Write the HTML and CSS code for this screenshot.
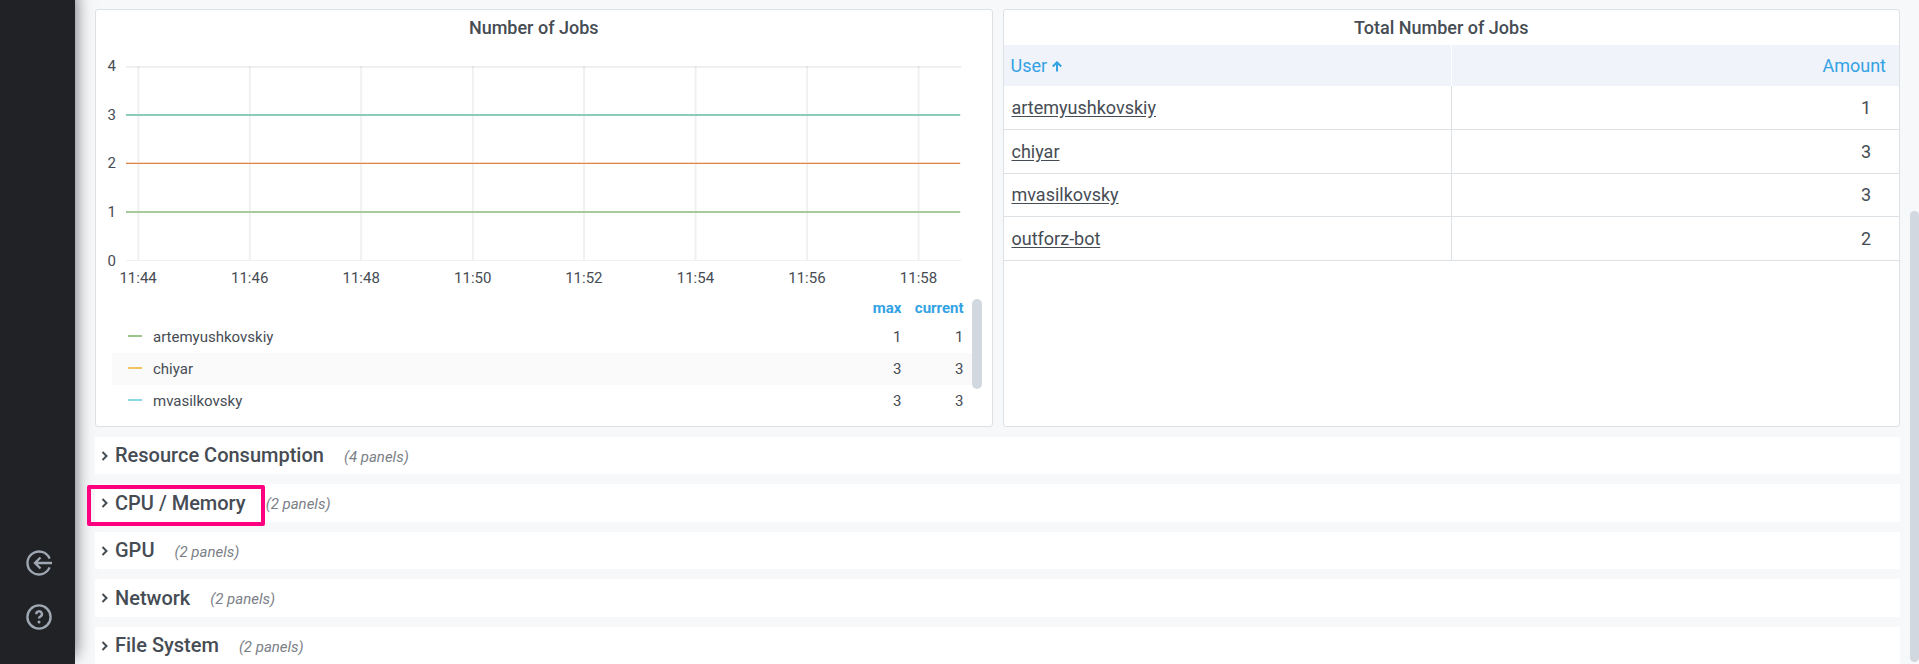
FILE: index.html
```html
<!DOCTYPE html>
<html lang="en">
<head>
<meta charset="utf-8">
<title>Jobs dashboard</title>
<link rel="stylesheet" href="styles.css">
</head>
<body>
<div class="app">
  <nav class="sidebar" aria-label="Main">
    <a class="side-link" href="#signin" aria-label="Sign in">
      <svg class="side-icon" viewBox="0 0 26 26"><path d="M23.600 8.600A11.500 11.500 0 1 0 23.600 17.400"/><path d="M26 13H9.500M14.500 7.500L9 13l5.500 5.500"/></svg>
    </a>
    <a class="side-link" href="#help" aria-label="Help">
      <svg class="side-icon" viewBox="0 0 26 26"><circle cx="13" cy="13" r="11.600"/><path d="M10.300 10.200A2.800 2.800 0 1 1 14.300 12.600Q13 13.200 13 14.600"/><circle class="dot" cx="13" cy="18" r="1.500"/></svg>
    </a>
  </nav>
  <main class="dashboard">
    <div class="panels">
      <section class="panel">
        <h2 class="panel-title">Number of Jobs</h2>
        <div class="chart">
          <svg class="plot" role="img" aria-label="Number of jobs over time">
            <g class="grid">
              <rect x="0" y="10" width="100%" height="2"/>
              <rect x="0" y="204" width="100%" height="1"/>
              <rect x="1.350%" y="10" width="2" height="194"/>
              <rect x="14.700%" y="10" width="2" height="194"/>
              <rect x="28.030%" y="10" width="2" height="194"/>
              <rect x="41.400%" y="10" width="2" height="194"/>
              <rect x="54.700%" y="10" width="2" height="194"/>
              <rect x="68.050%" y="10" width="2" height="194"/>
              <rect x="81.400%" y="10" width="2" height="194"/>
              <rect x="94.750%" y="10" width="2" height="194"/>
            </g>
            <rect class="teal" x="0" y="58" width="99.850%" height="2"/>
            <rect class="orange-soft" x="0" y="106" width="99.850%" height="1"/>
            <rect class="orange" x="0" y="107" width="99.850%" height="1"/>
            <rect class="green" x="0" y="155" width="99.850%" height="2"/>
            <g class="y-label">
              <text x="-10" y="15">4</text><text x="-10" y="64">3</text><text x="-10" y="112">2</text><text x="-10" y="161">1</text><text x="-10" y="210">0</text>
            </g>
            <g class="x-label">
              <text x="1.450%" y="227">11:44</text><text x="14.800%" y="227">11:46</text><text x="28.150%" y="227">11:48</text><text x="41.500%" y="227">11:50</text><text x="54.800%" y="227">11:52</text><text x="68.150%" y="227">11:54</text><text x="81.500%" y="227">11:56</text><text x="94.850%" y="227">11:58</text>
            </g>
          </svg>
        </div>
        <div class="legend">
          <table class="legend-table">
            <thead><tr><th class="name"></th><th>max</th><th>current</th></tr></thead>
            <tbody>
              <tr><td class="name"><i class="swatch s-green"></i>artemyushkovskiy</td><td>1</td><td>1</td></tr>
              <tr><td class="name"><i class="swatch s-yellow"></i>chiyar</td><td>3</td><td>3</td></tr>
              <tr><td class="name"><i class="swatch s-blue"></i>mvasilkovsky</td><td>3</td><td>3</td></tr>
            </tbody>
          </table>
          <div class="legend-track"><div class="thumb"></div></div>
        </div>
      </section>
      <section class="panel">
        <h2 class="panel-title">Total Number of Jobs</h2>
        <table class="users">
          <thead><tr>
            <th><button class="sort">User <svg class="arrow" viewBox="0 0 10 11"><path d="M5 10.500V1.500M0.800 5.500L5 1.300l4.200 4.200"/></svg></button></th>
            <th class="num"><button class="sort">Amount</button></th>
          </tr></thead>
          <tbody>
            <tr><td><a href="#u1">artemyushkovskiy</a></td><td class="num">1</td></tr>
            <tr><td><a href="#u2">chiyar</a></td><td class="num">3</td></tr>
            <tr><td><a href="#u3">mvasilkovsky</a></td><td class="num">3</td></tr>
            <tr><td><a href="#u4">outforz-bot</a></td><td class="num">2</td></tr>
          </tbody>
        </table>
      </section>
    </div>
    <div class="rows">
      <button class="row"><svg class="chevron" viewBox="0 0 8 10"><path d="M1.500 1L5.500 5l-4 4"/></svg><span class="row-title">Resource Consumption</span><span class="count">(4 panels)</span></button>
      <button class="row"><svg class="chevron" viewBox="0 0 8 10"><path d="M1.500 1L5.500 5l-4 4"/></svg><span class="row-title">CPU / Memory</span><span class="count">(2 panels)</span><span class="marker"></span></button>
      <button class="row"><svg class="chevron" viewBox="0 0 8 10"><path d="M1.500 1L5.500 5l-4 4"/></svg><span class="row-title">GPU</span><span class="count">(2 panels)</span></button>
      <button class="row"><svg class="chevron" viewBox="0 0 8 10"><path d="M1.500 1L5.500 5l-4 4"/></svg><span class="row-title">Network</span><span class="count">(2 panels)</span></button>
      <button class="row"><svg class="chevron" viewBox="0 0 8 10"><path d="M1.500 1L5.500 5l-4 4"/></svg><span class="row-title">File System</span><span class="count">(2 panels)</span></button>
    </div>
  </main>
  <div class="page-track"><div class="page-thumb"></div></div>
</div>
</body>
</html>
```
FILE: styles.css
```css
* { box-sizing: border-box; }
body {
  margin: 0;
  background: #f7f8fa;
  color: #464c54;
  font: 18px/24px Roboto, sans-serif;
}
button { border: 0; padding: 0; background: none; font: inherit; color: inherit; text-align: left; }
.app { display: flex; height: 100vh; overflow: hidden; }

.sidebar {
  flex: none;
  width: 75px;
  padding: 0 0 34px 26px;
  display: flex;
  flex-direction: column;
  justify-content: flex-end;
  gap: 28px;
  background: #202226;
  box-shadow: 0 -8px 16px rgba(0, 0, 0, .6);
}
.side-link { display: block; height: 26px; }
.side-icon { display: block; width: 26px; height: 26px; fill: none; stroke: #9fa7b3; stroke-width: 2.4; }
.side-icon .dot { fill: #9fa7b3; stroke: none; }

.dashboard { flex: 1; min-width: 0; padding: 9px 10px 0 20px; }
.panels { display: grid; grid-template-columns: 1fr 1fr; gap: 10px; }
.panel { min-width: 0; height: 418px; border: 1px solid #dce1e6; border-radius: 3px; background: #fff; }
.panel-title { margin: 0; height: 35px; padding-right: 20px; font-size: 18px; line-height: 36px; font-weight: 500; text-align: center; }

.chart { padding: 11px 30px 0; }
.plot { display: block; width: 100%; height: 240px; overflow: visible; font-size: 15px; }
.grid { fill: #000; fill-opacity: .06; }
.teal { fill: #8ccbb9; }
.orange { fill: #e0864a; }
.orange-soft { fill: #f6d9c4; }
.green { fill: #a6ca9b; }
.y-label { text-anchor: end; fill: #464c54; }
.x-label { text-anchor: middle; fill: #464c54; }

.legend { display: flex; margin: 3px 10px 0 16px; font-size: 15px; }
.legend-table { flex: 1; border-collapse: collapse; table-layout: fixed; }
.legend-table th, .legend-table td { height: 32px; padding: 0 8px 0 0; width: 62px; text-align: right; }
.legend-table th { height: 22px; color: #33a2e5; font-weight: 700; line-height: 18px; vertical-align: top; }
.legend-table .name { width: auto; padding-left: 16px; text-align: left; }
.legend-table tbody tr:nth-child(even) { background: #fafafa; }
.swatch { display: inline-block; width: 14px; height: 2px; margin-right: 11px; vertical-align: 5px; }
.s-green { background: #9ac48a; }
.s-yellow { background: #f2c55c; }
.s-blue { background: #8ad8e5; }
.legend-track { width: 10px; }
.thumb { height: 90px; border-radius: 5px; background: #d1d8e0; }

.users { width: 100%; border-collapse: separate; border-spacing: 0; table-layout: fixed; }
.users th { height: 41px; padding: 0 13px 0 7px; background: #f0f3f9; color: #33a2e5; font-weight: 400; text-align: left; }
.users th + th { border-left: 1px solid #fff; }
.users td { height: 44px; padding: 0 28px 0 8px; border-bottom: 1px solid #dce1e6; }
.users tr:nth-child(3) td { height: 43px; }
.users td + td { border-left: 1px solid #dce1e6; }
.users .num { text-align: right; }
.users a { color: inherit; text-underline-offset: 2px; }
.arrow { width: 10px; height: 11px; fill: none; stroke: #33a2e5; stroke-width: 2; }

.rows { display: flex; flex-direction: column; gap: 10px; margin-top: 10px; }
.row { position: relative; display: flex; align-items: center; height: 37px; padding-left: 6px; background: #fff; }
.row:nth-child(even) { height: 38px; }
.chevron { width: 8px; height: 10px; margin-right: 6px; fill: none; stroke: #464c54; stroke-width: 2; }
.row-title { padding-bottom: 1px; font-size: 20px; font-weight: 500; }
.count { padding-top: 2px; margin-left: 20px; color: #7b8087; font-size: 15px; font-style: italic; }
.marker { position: absolute; left: -8px; top: 1px; width: 178px; height: 41px; border: 4px solid #ff0080; border-radius: 2px; z-index: 1; }

.page-track { flex: none; width: 9px; padding: 211px 0 2px; display: flex; }
.page-thumb { flex: 1; border-radius: 5px; background: #d1d8e0; }
```
